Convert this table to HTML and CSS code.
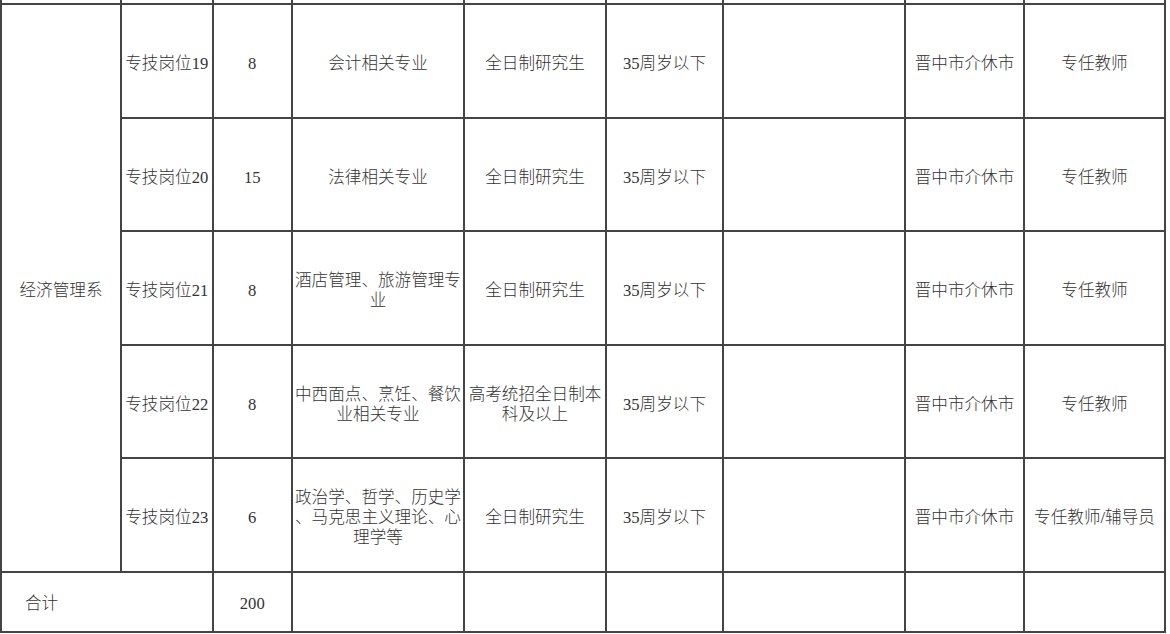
FILE: index.html
```html
<!DOCTYPE html>
<html lang="zh-CN">
<head>
<meta charset="utf-8">
<title>岗位表</title>
<link rel="stylesheet" href="styles.css">
</head>
<body>
<table class="grid">
  <colgroup>
    <col class="c1"><col class="c2"><col class="c3"><col class="c4"><col class="c5">
    <col class="c6"><col class="c7"><col class="c8"><col class="c9">
  </colgroup>
  <tr class="stub">
    <td></td><td></td><td></td><td></td><td></td><td></td><td></td><td></td><td></td>
  </tr>
  <tr class="row">
    <td rowspan="5">经济管理系</td>
    <td>专技岗位19</td><td>8</td><td>会计相关专业</td><td>全日制研究生</td><td>35周岁以下</td><td></td><td>晋中市介休市</td><td>专任教师</td>
  </tr>
  <tr class="row">
    <td>专技岗位20</td><td>15</td><td>法律相关专业</td><td>全日制研究生</td><td>35周岁以下</td><td></td><td>晋中市介休市</td><td>专任教师</td>
  </tr>
  <tr class="row">
    <td>专技岗位21</td><td>8</td><td>酒店管理、旅游管理专<br>业</td><td>全日制研究生</td><td>35周岁以下</td><td></td><td>晋中市介休市</td><td>专任教师</td>
  </tr>
  <tr class="row">
    <td>专技岗位22</td><td>8</td><td>中西面点、烹饪、餐饮<br>业相关专业</td><td>高考统招全日制本<br>科及以上</td><td>35周岁以下</td><td></td><td>晋中市介休市</td><td>专任教师</td>
  </tr>
  <tr class="row">
    <td>专技岗位23</td><td>6</td><td>政治学、哲学、历史学<br>、马克思主义理论、心<br>理学等</td><td>全日制研究生</td><td>35周岁以下</td><td></td><td>晋中市介休市</td><td>专任教师/辅导员</td>
  </tr>
  <tr class="total">
    <td colspan="2" class="sum-label">合计</td><td>200</td><td></td><td></td><td></td><td></td><td></td><td></td>
  </tr>
</table>
</body>
</html>
```

FILE: styles.css
```css
html, body {
  margin: 0;
  padding: 0;
  background: #ffffff;
}

body {
  font-family: "Liberation Serif", "Noto Sans CJK SC", serif;
  font-size: 16.6px;
  font-weight: 300;
  color: #333333;
  overflow: hidden;
}

.grid {
  border-collapse: collapse;
  table-layout: fixed;
  width: 1166px;
  border-top: none;
}

.c1 { width: 120px; }
.c2 { width: 91.5px; }
.c3 { width: 79.5px; }
.c4 { width: 172px; }
.c5 { width: 142px; }
.c6 { width: 117px; }
.c7 { width: 182px; }
.c8 { width: 119px; }
.c9 { width: 141px; }

.grid td {
  border: 2px solid #444444;
  padding: 0 1px;
  text-align: center;
  vertical-align: middle;
  line-height: 20px;
  white-space: nowrap;
}

.stub td {
  border-top: none;
  height: 3px;
  padding: 0;
  line-height: 0;
}

.row td {
  height: 104.5px;
  padding-top: 7px;
}

.total td {
  height: 54px;
  padding-top: 4px;
}

.grid td.sum-label {
  text-align: left;
  padding-left: 23px;
}
```
